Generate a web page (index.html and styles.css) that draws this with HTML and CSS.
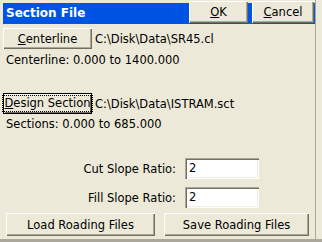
FILE: index.html
```html
<!DOCTYPE html>
<html>
<head>
<meta charset="utf-8">
<link rel="stylesheet" href="styles.css">
</head>
<body>
<div class="window">
  <div class="titlebar">
    <span class="title">Section File</span>
    <div class="tbtns">
      <button class="btn tb ok"><u>O</u>K</button>
      <button class="btn tb cancel"><u>C</u>ancel</button>
    </div>
  </div>
  <div class="content">
    <div class="row first">
      <button class="btn file-btn"><u>C</u>enterline</button>
      <span class="path">C:\Disk\Data\SR45.cl</span>
    </div>
    <div class="info">Centerline: 0.000 to 1400.000</div>
    <div class="row second">
      <button class="btn file-btn default"><span class="focus"><u>D</u>esign Section</span></button>
      <span class="path">C:\Disk\Data\ISTRAM.sct</span>
    </div>
    <div class="info info2">Sections: 0.000 to 685.000</div>
    <div class="form">
      <div class="frow"><span class="label">Cut Slope Ratio:</span><div class="input">2</div></div>
      <div class="frow"><span class="label">Fill Slope Ratio:</span><div class="input">2</div></div>
    </div>
    <div class="actions">
      <button class="btn act load">Load Roading Files</button>
      <button class="btn act save">Save Roading Files</button>
    </div>
  </div>
</div>
<div class="bottom"></div>
</body>
</html>
```
FILE: styles.css
```css
html, body {
  margin: 0;
  padding: 0;
  background: #ece9d8;
  width: 322px;
  height: 242px;
  overflow: hidden;
}
body {
  font-family: "DejaVu Sans", Verdana, sans-serif;
  font-size: 11.5px;
  color: #000;
}
.window {
  width: 316px;
  height: 239px;
  border-right: 1px solid #aca899;
  padding-top: 3px;
  box-sizing: border-box;
}
.titlebar {
  margin-left: 3px;
  height: 21px;
  background: #0054e3;
  display: flex;
  align-items: flex-start;
  justify-content: space-between;
}
.title {
  color: #fff;
  font-weight: bold;
  font-size: 12px;
  line-height: 21px;
  padding-left: 3px;
}
.tbtns {
  display: flex;
  gap: 4px;
  margin-top: -2px;
  padding-right: 1px;
}
.btn {
  font-family: inherit;
  font-size: 11.5px;
  color: #000;
  background: #ece9d8;
  border: none;
  margin: 0;
  padding: 0;
  box-shadow: inset 1px 1px 0 #fff, inset -1px -1px 0 #716f64, inset -2px -2px 0 #aca899;
  display: flex;
  align-items: center;
  justify-content: center;
}
.tb {
  height: 22px;
}
.ok { width: 59px; }
.cancel { width: 62px; }
.content {
  padding-left: 3px;
}
.row {
  display: flex;
  align-items: center;
}
.row.first { margin-top: 4px; }
.row.second { margin-top: 26px; }
.file-btn {
  width: 89px;
  height: 21px;
}
.file-btn.default {
  box-shadow: inset 0 0 0 1px #000, inset 1px 1px 0 1px #fff, inset -1px -1px 0 1px #716f64;
}
.focus {
  outline: 1px dotted #000;
  outline-offset: 0;
  padding: 0 1px;
  line-height: 15px;
}
.path {
  padding-left: 3px;
}
.info {
  padding-left: 3px;
  margin-top: 4px;
  line-height: 14px;
}
.info2 { margin-top: 3px; }
.form {
  margin-top: 27px;
  display: flex;
  flex-direction: column;
  gap: 8px;
}
.frow {
  display: grid;
  grid-template-columns: 173px 74px;
  column-gap: 9px;
  align-items: center;
}
.label {
  text-align: right;
}
.input {
  height: 21px;
  background: #fff;
  box-shadow: inset 1px 1px 0 #aca899, inset 2px 2px 0 #716f64, inset -1px -1px 0 #fff, inset -2px -2px 0 #f1efe2;
  line-height: 21px;
  padding-left: 4px;
  box-sizing: border-box;
}
.actions {
  margin-top: 5px;
  padding-left: 3px;
  display: flex;
  gap: 9px;
}
.act { height: 23px; }
.load { width: 149px; }
.save { width: 145px; }
.bottom {
  height: 3px;
  background: #aca899;
}
```
